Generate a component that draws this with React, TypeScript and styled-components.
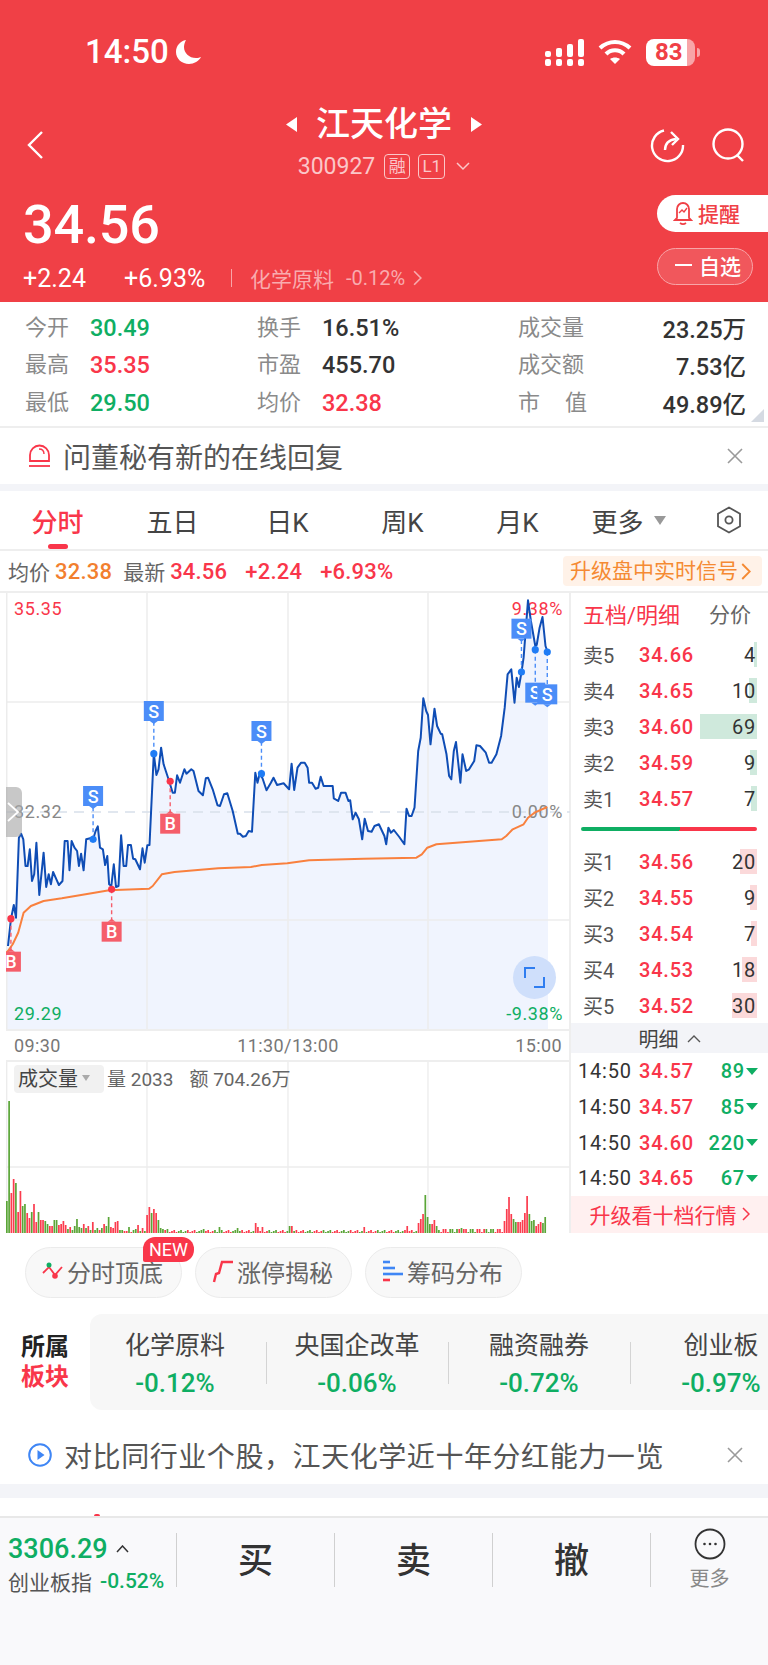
import styled, { createGlobalStyle } from "styled-components";

const RED = "#f9364a";
const GREEN = "#0fae63";
const HEADER_RED = "#f04046";

const GlobalStyle = createGlobalStyle`
  html, body {
    margin: 0;
    padding: 0;
    background: #fff;
  }
  body {
    font-family: Roboto, "Noto Sans CJK SC", sans-serif;
  }
  * {
    box-sizing: border-box;
  }
`;

const Page = styled.div`
  width: 768px;
  height: 1665px;
  overflow: hidden;
  display: flex;
  flex-direction: column;
`;

const Header = styled.header`
  height: 302px;
  flex: none;
  background: ${HEADER_RED};
  color: #fff;
`;

const StatusBar = styled.div`
  height: 104px;
  padding: 37px 73px 0 85px;
  display: flex;
  justify-content: space-between;
  align-items: flex-start;
`;

const StatusLeft = styled.div`
  display: flex;
  align-items: center;
  gap: 6px;
`;

const Clock = styled.span`
  font-size: 33px;
  font-weight: 500;
  line-height: 30px;
`;

const StatusRight = styled.div`
  display: flex;
  align-items: center;
  gap: 14px;
  height: 30px;
`;

const Battery = styled.div`
  position: relative;
  width: 49px;
  height: 27px;
  border-radius: 8px;
  background: linear-gradient(90deg, #fff 0 83%, #f8a5a8 83%);
  color: ${HEADER_RED};
  font-size: 24px;
  font-weight: 700;
  line-height: 27px;
  padding-left: 9px;

  &::after {
    content: "";
    position: absolute;
    right: -5px;
    top: 9px;
    width: 3px;
    height: 9px;
    border-radius: 0 3px 3px 0;
    background: #f8a5a8;
  }
`;

const TitleRow = styled.div`
  height: 82px;
  padding: 0 22px 0 26px;
  display: grid;
  grid-template-columns: 1fr auto 1fr;
  align-items: center;
`;

const NavIcons = styled.div`
  display: flex;
  justify-content: flex-end;
  gap: 26px;
`;

const TitleBlock = styled.div`
  display: flex;
  flex-direction: column;
  align-items: center;
  margin: -3px 0 0 -4px;
`;

const TitleLine = styled.div`
  display: flex;
  align-items: center;
  gap: 19px;
  height: 40px;
  margin-top: -2px;
`;

const Title = styled.h1`
  margin: 0;
  font-size: 34px;
  line-height: 40px;
  font-weight: 500;
`;

const CodeLine = styled.div`
  margin-top: 7px;
  display: flex;
  align-items: center;
  height: 30px;
  color: #fbc7c9;
  font-size: 23px;
`;

const CodeBadge = styled.span<{ $w: number; $l: number }>`
  width: ${(p) => p.$w}px;
  height: 25px;
  margin-left: ${(p) => p.$l}px;
  border: 1px solid #fbc7c9;
  border-radius: 4px;
  font-size: 17px;
  line-height: 23px;
  text-align: center;
`;

const CodeChevron = styled.span`
  margin-left: 11px;
  display: flex;
`;

const QuoteRow = styled.div`
  height: 116px;
  display: flex;
  justify-content: space-between;
`;

const QuoteLeft = styled.div`
  padding: 15px 0 0 23px;
`;

const Price = styled.div`
  font-size: 54px;
  line-height: 48px;
  font-weight: 500;
  letter-spacing: -0.2px;
`;

const ChangeLine = styled.div`
  margin-top: 14px;
  height: 30px;
  display: flex;
  align-items: center;
  font-size: 25px;
  font-weight: 400;
`;

const ChangeValue = styled.span<{ $w: number }>`
  width: ${(p) => p.$w}px;
`;

const ChangeDivider = styled.span`
  width: 1px;
  height: 18px;
  background: #f8a5a8;
  margin-right: 18px;
`;

const SectorName = styled.span`
  color: #f9abae;
  font-size: 21px;
  font-weight: 400;
`;

const SectorValue = styled.span`
  margin: 0 8px 0 12px;
  color: #f9abae;
  font-size: 20px;
  font-weight: 400;
`;

const QuoteButtons = styled.div`
  width: 111px;
  padding-top: 9px;
  display: flex;
  flex-direction: column;
  gap: 16px;
`;

const RemindButton = styled.div`
  height: 37px;
  padding: 0 0 2px 16px;
  border-radius: 19px 0 0 19px;
  background: #fff;
  color: ${HEADER_RED};
  font-size: 21px;
  font-weight: 500;
  display: flex;
  align-items: center;
  gap: 5px;
`;

const WatchButton = styled.div`
  width: 96px;
  height: 37px;
  padding: 0 0 3px 17px;
  border-radius: 19px;
  border: 1px solid #f8a5a8;
  background: rgba(255, 255, 255, 0.12);
  font-size: 21px;
  font-weight: 500;
  display: flex;
  align-items: center;
  gap: 7px;

  &::before {
    content: "";
    width: 17px;
    height: 2px;
    background: #fff;
  }
`;

const Stats = styled.section`
  position: relative;
  height: 126px;
  flex: none;
  padding: 6px 22px 0 25px;
  border-bottom: 2px solid #eee;
  display: grid;
  grid-template-columns: 232px 261px 1fr;
  grid-template-rows: repeat(3, 37.5px);
  font-size: 21px;

  &::after {
    content: "";
    position: absolute;
    right: 4px;
    bottom: 4px;
    border-style: solid;
    border-width: 0 0 13px 13px;
    border-color: transparent transparent #d5dae2 transparent;
  }
`;

const StatCell = styled.div`
  display: flex;
  align-items: center;
`;

const StatLabel = styled.span<{ $w: number }>`
  width: ${(p) => p.$w}px;
  margin-top: -4px;
  color: #8a8a8a;
  font-size: 22px;
`;

const StatValue = styled.span<{ $c?: string; $right?: boolean }>`
  color: ${(p) => p.$c ?? "#333"};
  font-size: 23.5px;
  font-weight: 500;
  margin-top: 2px;
  margin-left: ${(p) => (p.$right ? "auto" : "0")};
`;

const Spread = styled.span`
  display: flex;
  justify-content: space-between;
  width: 69px;
  margin-top: -4px;
  color: #8a8a8a;
  font-size: 22px;
`;

const Notice = styled.div<{ $h: number; $top?: number }>`
  height: ${(p) => p.$h}px;
  flex: none;
  padding: ${(p) => p.$top ?? 0}px 24px 0 28px;
  display: flex;
  align-items: center;
  gap: 12px;
  color: #555;
  font-size: 28px;
`;

const NoticeText = styled.span<{ $sp?: number }>`
  flex: 1;
  letter-spacing: ${(p) => p.$sp ?? 0}px;
  white-space: nowrap;
`;

const GrayBand = styled.div<{ $h: number }>`
  height: ${(p) => p.$h}px;
  flex: none;
  background: #f3f4f8;
`;

const Tabs = styled.nav`
  position: relative;
  height: 60px;
  flex: none;
  display: flex;
  align-items: center;
  border-bottom: 2px solid #eee;
`;

const Tab = styled.div<{ $active?: boolean }>`
  position: relative;
  width: 115px;
  height: 100%;
  display: flex;
  align-items: center;
  justify-content: center;
  gap: 10px;
  color: ${(p) => (p.$active ? RED : "#444")};
  font-size: 26px;
  font-weight: ${(p) => (p.$active ? 500 : 400)};

  ${(p) =>
    p.$active &&
    `&::after {
      content: "";
      position: absolute;
      left: 48px;
      bottom: 0;
      width: 20px;
      height: 5px;
      border-radius: 3px;
      background: ${RED};
    }`}
`;

const MoreTab = styled(Tab)`
  padding-right: 8px;
`;

const DownTriangle = styled.span`
  border-style: solid;
  border-width: 9px 6.5px 0 6.5px;
  border-color: #999 transparent transparent transparent;
`;

const SettingsIcon = styled.div`
  margin-left: 26px;
  display: flex;
`;

const InfoRow = styled.div`
  height: 40px;
  flex: none;
  padding: 0 6px 0 8px;
  display: flex;
  align-items: center;
  font-size: 21px;
`;

const InfoValue = styled.span<{ $c: string; $l: number }>`
  margin-left: ${(p) => p.$l}px;
  color: ${(p) => p.$c};
  font-size: 22px;
  font-weight: 500;
  letter-spacing: 0.2px;
`;

const InfoLabel = styled.span<{ $l?: number }>`
  margin-left: ${(p) => p.$l ?? 0}px;
  color: #666;
`;

const UpgradePill = styled.div`
  margin-left: auto;
  width: 199px;
  height: 30px;
  padding-left: 7px;
  border-radius: 4px;
  background: #fff2e8;
  color: #f58a33;
  font-size: 21px;
  line-height: 30px;
  white-space: nowrap;
  display: flex;
  align-items: center;
  gap: 3px;
`;

const Market = styled.section`
  height: 642px;
  flex: none;
  display: flex;
  border-top: 2px solid #eee;
`;

const ChartColumn = styled.div`
  width: 571px;
  padding-left: 6px;
  border-right: 2px solid #eee;
  display: flex;
  flex-direction: column;
`;

const ChartBox = styled.div`
  position: relative;
  height: 436px;
`;

const ChartSvg = styled.svg`
  display: block;
`;

const Handle = styled.div`
  position: absolute;
  left: 0;
  top: 194px;
  width: 16px;
  height: 50px;
  border-radius: 0 6px 6px 0;
  background: rgba(170, 170, 170, 0.65);
  display: flex;
  align-items: center;
`;

const ExpandButton = styled.div`
  position: absolute;
  left: 507px;
  top: 363px;
  width: 43px;
  height: 43px;
  border-radius: 50%;
  background: #cfdffb;
  display: flex;
  align-items: center;
  justify-content: center;
`;

const TimeAxis = styled.div`
  height: 34px;
  padding: 0 7px 0 8px;
  border-top: 2px solid #eee;
  border-bottom: 2px solid #eee;
  display: flex;
  justify-content: space-between;
  align-items: center;
  color: #777;
  font-size: 18px;
  letter-spacing: 0.4px;
`;

const VolumeBox = styled.div`
  position: relative;
  height: 172px;
`;

const VolumeLegend = styled.div`
  position: absolute;
  left: 8px;
  top: 3px;
  display: flex;
  align-items: center;
  color: #666;
  font-size: 19px;
`;

const VolumeChip = styled.span`
  width: 90px;
  height: 28px;
  padding: 0 0 3px 4px;
  margin-right: 3px;
  border-radius: 4px;
  background: #f1f1f1;
  color: #444;
  font-size: 20px;
  display: flex;
  align-items: center;
  gap: 4px;
`;

const SmallTriangle = styled.span`
  border-style: solid;
  border-width: 6px 4.5px 0 4.5px;
  border-color: #aaa transparent transparent transparent;
`;

const LegendText = styled.span`
  margin-top: -4px;
`;

const LegendGap = styled.span`
  margin-left: 16px;
`;

const SidePanel = styled.aside`
  flex: 1;
  display: flex;
  flex-direction: column;
`;

const SideHead = styled.div`
  height: 44px;
  padding: 0 17px 4px 12px;
  display: flex;
  justify-content: space-between;
  align-items: center;
`;

const SideTitle = styled.span`
  color: ${RED};
  font-size: 22px;
`;

const SideLink = styled.span`
  color: #666;
  font-size: 21px;
`;

const Book = styled.div`
  display: flex;
  flex-direction: column;
`;

const BookRow = styled.div`
  position: relative;
  height: 36px;
  padding: 0 12px 0 12px;
  display: flex;
  align-items: center;
  font-size: 20px;
`;

const DepthBar = styled.span<{ $c: string }>`
  position: absolute;
  right: 11px;
  top: 5px;
  height: 25px;
  background: ${(p) => p.$c};
`;

const RowLabel = styled.span`
  width: 56px;
  color: #555;
`;

const RowPrice = styled.span`
  color: ${RED};
  font-weight: 500;
  letter-spacing: 0.8px;
`;

const RowValue = styled.span`
  position: relative;
  margin-left: auto;
  color: #333;
  letter-spacing: 0.8px;
`;

const SplitBar = styled.div`
  height: 4px;
  margin: 10px 11px 13px 10px;
  border-radius: 2px;
  background: linear-gradient(100deg, ${GREEN} 0 56%, ${RED} 56%);
`;

const DetailHead = styled.div`
  height: 31px;
  margin-top: -1px;
  background: #f3f4f8;
  display: flex;
  align-items: center;
  justify-content: center;
  gap: 8px;
  color: #444;
  font-size: 20px;
`;

const TradeRow = styled.div`
  height: 36px;
  padding: 0 10px 0 7px;
  display: flex;
  align-items: center;
  font-size: 20px;
  letter-spacing: 0.8px;
`;

const TradeTime = styled.span`
  width: 61px;
  color: #333;
`;

const TradeVolume = styled.span`
  margin-left: auto;
  margin-right: 1px;
  color: ${GREEN};
  font-weight: 500;
`;

const GreenTriangle = styled.span`
  border-style: solid;
  border-width: 7px 6.5px 0 6.5px;
  border-color: ${GREEN} transparent transparent transparent;
`;

const UpgradeBar = styled.div`
  height: 37px;
  padding-bottom: 2px;
  background: #fff0f0;
  color: ${RED};
  font-size: 21px;
  display: flex;
  align-items: center;
  justify-content: center;
  gap: 5px;
`;

const PillRow = styled.div`
  height: 81px;
  flex: none;
  padding: 14px 0 0 25px;
  display: flex;
  gap: 13px;
`;

const Pill = styled.div`
  position: relative;
  width: 157px;
  height: 51px;
  padding: 0 0 3px 16px;
  border-radius: 26px;
  border: 1px solid #ebebeb;
  background: #f8f8f8;
  color: #666;
  font-size: 24px;
  display: flex;
  align-items: center;
  gap: 3px;
`;

const NewBadge = styled.span`
  position: absolute;
  left: 117px;
  top: -11px;
  width: 51px;
  height: 25px;
  border-radius: 12px 12px 12px 2px;
  background: ${RED};
  color: #fff;
  font-size: 18px;
  line-height: 25px;
  text-align: center;
`;

const SectorRow = styled.section`
  height: 96px;
  flex: none;
  display: flex;
`;

const SectorHead = styled.div`
  width: 90px;
  flex: none;
  padding: 18px 0 0 21px;
  font-size: 24px;
  line-height: 30px;
  font-weight: 700;
  color: #222;
`;

const SectorHeadRed = styled.div`
  color: ${RED};
`;

const SectorBox = styled.div`
  flex: 1;
  padding-top: 4px;
  border-radius: 12px 0 0 12px;
  background: #f7f7f7;
  display: flex;
  align-items: center;
  overflow: hidden;
`;

const SectorItem = styled.div`
  position: relative;
  width: 182px;
  flex: none;
  display: flex;
  flex-direction: column;
  align-items: center;
  gap: 7px;

  &:first-child {
    margin-left: -6px;
  }

  &:not(:first-child)::before {
    content: "";
    position: absolute;
    left: 0;
    top: 12px;
    width: 1px;
    height: 42px;
    background: #d4d4d4;
  }
`;

const SectorItemName = styled.span`
  color: #444;
  font-size: 25px;
  line-height: 31px;
  white-space: nowrap;
`;

const SectorItemValue = styled.span`
  color: ${GREEN};
  font-size: 26px;
  line-height: 31px;
  font-weight: 500;
  white-space: nowrap;
`;

const BlankStrip = styled.div`
  position: relative;
  height: 20px;
  flex: none;
  border-bottom: 2px solid #e8e8e8;

  &::after {
    content: "";
    position: absolute;
    left: 94px;
    bottom: 0;
    width: 6px;
    height: 2px;
    border-radius: 3px 3px 0 0;
    background: ${RED};
  }
`;

const BottomBar = styled.footer`
  flex: 1;
  padding-top: 15px;
  background: #f9f9fb;
  display: flex;
  align-items: flex-start;
`;

const IndexCell = styled.div`
  width: 176px;
  height: 54px;
  flex: none;
  padding-left: 8px;
`;

const IndexLine = styled.div`
  display: flex;
  align-items: center;
  gap: 8px;
  height: 32px;
  color: ${GREEN};
  font-size: 27px;
  font-weight: 500;
`;

const IndexSub = styled.div`
  display: flex;
  align-items: center;
  gap: 8px;
  height: 32px;
  color: #555;
  font-size: 21px;
  white-space: nowrap;
`;

const IndexSubValue = styled.span`
  color: ${GREEN};
  font-size: 21px;
  font-weight: 500;
`;

const TradeButton = styled.div`
  width: 158px;
  height: 54px;
  padding-bottom: 6px;
  flex: none;
  border-left: 1px solid #d0d0d0;
  color: #333;
  font-size: 35px;
  font-weight: 500;
  display: flex;
  align-items: center;
  justify-content: center;
`;

const MoreCell = styled.div`
  flex: 1;
  height: 54px;
  border-left: 1px solid #d0d0d0;
  display: flex;
  flex-direction: column;
  align-items: center;
  color: #888;
  font-size: 20px;
  line-height: 26px;
`;

const MoreCircleWrap = styled.div`
  margin: -5px 0 6px;
  height: 32px;
  display: flex;
`;

const z = (x: number, y: number): [number, number] => [x / 2.75 - 6, y / 3 - 2];

const PRICE: [number, number][] = [
  [22, 1065], [30, 985], [38, 942], [44, 980], [52, 740], [58, 728], [64, 745], [70, 825], [76, 825], [82, 775], [88, 870], [94, 850], [100, 755], [108, 912], [120, 785], [127, 888], [134, 850], [140, 880], [146, 843], [155, 865], [162, 882], [172, 870], [178, 750], [186, 750], [191, 838], [197, 750], [205, 770], [212, 780], [217, 825], [223, 788], [230, 838], [237, 745], [248, 742], [256, 745], [263, 720], [269, 706], [275, 770], [283, 775], [289, 822], [295, 795], [300, 880], [306, 885], [313, 820], [319, 888], [326, 885], [333, 733], [340, 825], [347, 825], [352, 762], [360, 762], [366, 803], [372, 805], [385, 835], [392, 772], [398, 815], [405, 763], [411, 762], [423, 488], [430, 552], [436, 535], [443, 470], [450, 520], [465, 570], [475, 605], [481, 605], [487, 553], [495, 575], [507, 535], [513, 548], [526, 535], [532, 540], [546, 600], [558, 613], [566, 562], [572, 560], [585, 595], [598, 643], [605, 645], [616, 610], [625, 607], [640, 660], [654, 728], [660, 728], [668, 737], [676, 735], [684, 720], [693, 722], [702, 545], [708, 575], [714, 548], [722, 562], [733, 598], [745, 575], [752, 560], [762, 582], [780, 577], [795, 595], [802, 518], [809, 597], [818, 530], [828, 515], [838, 515], [846, 530], [850, 575], [858, 575], [868, 593], [875, 590], [882, 557], [890, 585], [915, 585], [918, 622], [930, 630], [938, 605], [950, 605], [958, 630], [963, 628], [970, 685], [978, 665], [987, 685], [996, 745], [1003, 683], [1012, 720], [1022, 722], [1030, 705], [1042, 700], [1057, 735], [1062, 760], [1068, 710], [1075, 725], [1083, 717], [1098, 738], [1112, 760], [1118, 653], [1125, 675], [1132, 675], [1140, 650], [1150, 480], [1157, 440], [1164, 322], [1172, 360], [1177, 372], [1184, 460], [1195, 353], [1202, 405], [1212, 428], [1216, 430], [1228, 490], [1235, 555], [1241, 565], [1248, 480], [1254, 453], [1266, 575], [1272, 490], [1282, 540], [1290, 535], [1304, 510], [1310, 463], [1320, 465], [1336, 485], [1345, 515], [1352, 515], [1365, 490], [1378, 435], [1388, 350], [1396, 250], [1406, 235], [1415, 335], [1421, 260], [1427, 288], [1434, 243], [1440, 200], [1452, 28], [1460, 90], [1472, 165], [1476, 162], [1484, 110], [1492, 78], [1500, 165], [1505, 180],
];

const AVERAGE: [number, number][] = [
  [17, 1085], [22, 1080], [35, 1060], [50, 1025], [65, 965], [85, 945], [120, 930], [170, 922], [260, 905], [300, 898], [410, 893], [420, 885], [445, 850], [480, 843], [600, 832], [690, 828], [720, 822], [790, 817], [850, 808], [1000, 803], [1145, 800], [1160, 790], [1175, 770], [1200, 760], [1380, 745], [1392, 735], [1410, 715], [1440, 700], [1452, 680], [1470, 665], [1505, 648],
];

const pts = (list: [number, number][]) =>
  list.map(([x, y]) => z(x, y).map((n) => n.toFixed(1)).join(",")).join(" ");

const AREA = `${z(17, 1315).join(",")} ${z(17, 1085).join(",")} ${pts(PRICE)} ${z(1507, 180).join(",")} ${z(1507, 1315).join(",")}`;

const SIGNALS: { kind: "S" | "B"; x: number; y: number; ly: number }[] = [
  { kind: "S", x: 256, y: 745, ly: 615 },
  { kind: "S", x: 423, y: 488, ly: 360 },
  { kind: "S", x: 719, y: 548, ly: 420 },
  { kind: "S", x: 1434, y: 243, ly: 113 },
  { kind: "S", x: 1472, y: 176, ly: 305 },
  { kind: "S", x: 1505, y: 183, ly: 310 },
  { kind: "B", x: 30, y: 983, ly: 1112 },
  { kind: "B", x: 307, y: 895, ly: 1022 },
  { kind: "B", x: 468, y: 571, ly: 698 },
];

const Signal = ({ kind, x, y, ly }: { kind: "S" | "B"; x: number; y: number; ly: number }) => {
  const [px, py] = z(x, y);
  const [, lab] = z(x, ly);
  const sell = kind === "S";
  const fill = sell ? "#4b8df8" : "#f55d6a";
  const dot = sell ? "#1f7cf5" : RED;
  const tip = sell ? lab + 13 : lab - 13;
  const edge = sell ? lab + 10 : lab - 10;
  return (
    <g>
      <line x1={px} y1={py} x2={px} y2={lab} stroke={fill} strokeWidth="1.4" strokeDasharray="4 3" />
      <rect x={px - 10} y={lab - 10} width="20" height="20" fill={fill} />
      <polygon points={`${px - 4},${edge} ${px + 4},${edge} ${px},${tip}`} fill={fill} />
      <text x={px} y={lab + 6.5} textAnchor="middle" fill="#fff" fontSize="18" fontWeight="500" fontFamily="Roboto, sans-serif">
        {kind}
      </text>
      <circle cx={px} cy={py} r="3.6" fill={dot} />
    </g>
  );
};

const HEAD_BARS: [number, string][] = [
  [32, "g"], [132, "g"], [40, "r"], [54, "r"], [50, "g"], [21, "r"], [42, "r"], [27, "g"], [29, "g"], [20, "r"], [15, "r"], [21, "g"], [29, "r"], [11, "r"], [21, "g"], [13, "r"], [13, "r"], [12, "g"], [9, "g"], [7, "r"], [7, "r"], [13, "g"], [13, "g"], [8, "r"], [9, "r"], [12, "r"], [8, "r"], [4, "g"], [6, "r"], [3, "g"], [7, "g"], [14, "g"], [6, "g"], [5, "g"], [9, "r"], [5, "g"], [7, "r"], [3, "g"], [11, "r"], [3, "g"], [5, "g"], [3, "r"], [5, "g"], [9, "r"], [7, "g"], [16, "g"], [6, "r"], [5, "r"], [11, "r"], [12, "r"], [3, "g"], [3, "g"], [2, "r"], [2, "r"], [6, "g"], [1, "r"], [3, "g"], [4, "g"], [8, "r"], [2, "g"], [5, "r"], [2, "g"], [18, "r"], [26, "r"], [20, "g"], [24, "r"], [20, "r"], [13, "g"], [5, "g"], [4, "g"], [3, "r"], [4, "g"],
];

const SPIKES: Record<number, [number, string]> = {
  87: [4, "g"], 94: [6, "g"], 102: [5, "g"], 110: [10, "r"], 111: [6, "r"], 113: [6, "r"], 125: [7, "g"], 126: [7, "r"], 158: [6, "r"], 177: [7, "r"], 182: [10, "r"], 183: [14, "r"], 184: [19, "r"], 185: [38, "g"], 186: [16, "g"], 187: [9, "g"], 188: [9, "r"], 189: [13, "r"], 190: [7, "g"], 191: [3, "g"], 201: [5, "g"], 220: [12, "r"], 221: [24, "r"], 222: [36, "r"], 223: [19, "r"], 224: [14, "g"], 225: [11, "g"], 226: [11, "r"], 227: [11, "r"], 228: [13, "r"], 229: [20, "r"], 230: [37, "r"], 231: [19, "g"], 232: [12, "g"], 233: [13, "g"], 234: [7, "r"], 235: [9, "r"], 236: [11, "r"], 237: [10, "g"], 238: [16, "g"],
};

const VOLUME_BARS = Array.from({ length: 239 }, (_, i): [number, string] => {
  if (i < HEAD_BARS.length) return HEAD_BARS[i];
  if (SPIKES[i]) return SPIKES[i];
  const low = 1 + ((i * 7) % 3) + (i > 192 && i < 220 ? (i * 5) % 3 : 0);
  return [low, (i >> 2) % 2 === 0 ? "r" : "g"];
});

const ASKS = [
  { label: "卖5", price: "34.66", size: "4", bar: 3 },
  { label: "卖4", price: "34.65", size: "10", bar: 8 },
  { label: "卖3", price: "34.60", size: "69", bar: 57 },
  { label: "卖2", price: "34.59", size: "9", bar: 7 },
  { label: "卖1", price: "34.57", size: "7", bar: 6 },
];

const BIDS = [
  { label: "买1", price: "34.56", size: "20", bar: 17 },
  { label: "买2", price: "34.55", size: "9", bar: 7 },
  { label: "买3", price: "34.54", size: "7", bar: 6 },
  { label: "买4", price: "34.53", size: "18", bar: 15 },
  { label: "买5", price: "34.52", size: "30", bar: 25 },
];

const TRADES = [
  { price: "34.57", size: "89" },
  { price: "34.57", size: "85" },
  { price: "34.60", size: "220" },
  { price: "34.65", size: "67" },
];

const SECTORS = [
  { name: "化学原料", value: "-0.12%" },
  { name: "央国企改革", value: "-0.06%" },
  { name: "融资融券", value: "-0.72%" },
  { name: "创业板", value: "-0.97%" },
];

const CloseIcon = () => (
  <svg width="18" height="18" viewBox="0 0 18 18" fill="none" stroke="#9a9a9a" strokeWidth="1.6">
    <path d="M2 2l14 14M16 2L2 16" />
  </svg>
);

const Chevron = ({ c, w = 8, h = 14 }: { c: string; w?: number; h?: number }) => (
  <svg width={w} height={h} viewBox="0 0 8 14" fill="none" stroke={c} strokeWidth="1.5">
    <path d="M1 1l6 6-6 6" />
  </svg>
);

const App = () => {
  return (
    <Page>
      <GlobalStyle />
      <Header>
        <StatusBar>
          <StatusLeft>
            <Clock>14:50</Clock>
            <svg width="27" height="26" viewBox="0 0 27 26">
              <path d="M11 1C5 2 1 7 1 13c0 7 6 12 13 12 5 0 10-3 12-7-1 .5-3 1-5 1-7 0-12-5-12-11 0-3 1-5 2-7z" fill="#fff" />
            </svg>
          </StatusLeft>
          <StatusRight>
            <svg width="39" height="27" viewBox="0 0 39 27" fill="#fff">
              <rect x="0" y="12" width="6" height="6" rx="2" />
              <rect x="0" y="20" width="6" height="7" rx="2" />
              <rect x="11" y="9" width="6" height="9" rx="2" />
              <rect x="11" y="20" width="6" height="7" rx="2" />
              <rect x="22" y="5" width="6" height="13" rx="2" />
              <rect x="22" y="20" width="6" height="7" rx="2" />
              <rect x="33" y="0" width="6" height="18" rx="2" />
              <rect x="33" y="20" width="6" height="7" rx="2" />
            </svg>
            <svg width="34" height="26" viewBox="0 0 34 26" fill="none" stroke="#fff" strokeWidth="4.2">
              <path d="M2 9c9-8 21-8 30 0" />
              <path d="M8 15c5-5 13-5 18 0" />
              <path d="M17 25l-5-5c3-2 7-2 10 0z" fill="#fff" stroke="none" />
            </svg>
            <Battery>83</Battery>
          </StatusRight>
        </StatusBar>
        <TitleRow>
          <svg width="18" height="30" viewBox="0 0 18 30" fill="none" stroke="#fff" strokeWidth="2.4">
            <path d="M16 2L3 15l13 13" />
          </svg>
          <TitleBlock>
            <TitleLine>
              <svg width="11" height="15" viewBox="0 0 11 15" fill="#fff">
                <path d="M11 0v15L0 7.5z" />
              </svg>
              <Title>江天化学</Title>
              <svg width="11" height="15" viewBox="0 0 11 15" fill="#fff">
                <path d="M0 0v15l11-7.500z" />
              </svg>
            </TitleLine>
            <CodeLine>
              300927
              <CodeBadge $w={26} $l={9}>融</CodeBadge>
              <CodeBadge $w={27} $l={8}>L1</CodeBadge>
              <CodeChevron>
                <svg width="14" height="9" viewBox="0 0 14 9" fill="none" stroke="#fbc7c9" strokeWidth="1.5">
                  <path d="M1 1l6 6 6-6" />
                </svg>
              </CodeChevron>
            </CodeLine>
          </TitleBlock>
          <NavIcons>
            <svg width="35" height="35" viewBox="0 0 35 35" fill="none" stroke="#fff" strokeWidth="2.4">
              <path d="M14 2.500A15.500 15.500 0 1 0 33 17" />
              <path d="M15 22c0-6 3-10 11-11" />
              <path d="M21 4l7 7-6 6" />
            </svg>
            <svg width="35" height="35" viewBox="0 0 35 35" fill="none" stroke="#fff" strokeWidth="2.4">
              <circle cx="17" cy="16" r="14.500" />
              <path d="M26 27l6 6" />
            </svg>
          </NavIcons>
        </TitleRow>
        <QuoteRow>
          <QuoteLeft>
            <Price>34.56</Price>
            <ChangeLine>
              <ChangeValue $w={101}>+2.24</ChangeValue>
              <ChangeValue $w={107}>+6.93%</ChangeValue>
              <ChangeDivider />
              <SectorName>化学原料</SectorName>
              <SectorValue>-0.12%</SectorValue>
              <Chevron c="#f9abae" w={9} h={16} />
            </ChangeLine>
          </QuoteLeft>
          <QuoteButtons>
            <RemindButton>
              <svg width="20" height="26" viewBox="0 0 20 26" fill="none" stroke={HEADER_RED} strokeWidth="1.8">
                <path d="M4 18V9a6 6 0 0 1 12 0v9l2 2H2z" />
                <path d="M7 23c2 1.500 4 1.500 6 0" />
                <path d="M6 13l3-3 2 2 3-4" strokeWidth="1.400" />
              </svg>
              提醒
            </RemindButton>
            <WatchButton>自选</WatchButton>
          </QuoteButtons>
        </QuoteRow>
      </Header>

      <Stats>
        <StatCell>
          <StatLabel $w={65}>今开</StatLabel>
          <StatValue $c={GREEN}>30.49</StatValue>
        </StatCell>
        <StatCell>
          <StatLabel $w={65}>换手</StatLabel>
          <StatValue>16.51%</StatValue>
        </StatCell>
        <StatCell>
          <StatLabel $w={69}>成交量</StatLabel>
          <StatValue $right>23.25万</StatValue>
        </StatCell>
        <StatCell>
          <StatLabel $w={65}>最高</StatLabel>
          <StatValue $c={RED}>35.35</StatValue>
        </StatCell>
        <StatCell>
          <StatLabel $w={65}>市盈</StatLabel>
          <StatValue>455.70</StatValue>
        </StatCell>
        <StatCell>
          <StatLabel $w={69}>成交额</StatLabel>
          <StatValue $right>7.53亿</StatValue>
        </StatCell>
        <StatCell>
          <StatLabel $w={65}>最低</StatLabel>
          <StatValue $c={GREEN}>29.50</StatValue>
        </StatCell>
        <StatCell>
          <StatLabel $w={65}>均价</StatLabel>
          <StatValue $c={RED}>32.38</StatValue>
        </StatCell>
        <StatCell>
          <Spread>
            <span>市</span>
            <span>值</span>
          </Spread>
          <StatValue $right>49.89亿</StatValue>
        </StatCell>
      </Stats>

      <Notice $h={56}>
        <svg width="23" height="24" viewBox="0 0 23 24" fill="none" stroke={RED} strokeWidth="1.8">
          <path d="M2 17V11a9.500 9.500 0 0 1 19 0v6z" />
          <path d="M1 22h21" />
          <path d="M11 5c3 0 5 2 5 5" strokeWidth="1.400" />
        </svg>
        <NoticeText>问董秘有新的在线回复</NoticeText>
        <CloseIcon />
      </Notice>
      <GrayBand $h={7} />

      <Tabs>
        <Tab $active>分时</Tab>
        <Tab>五日</Tab>
        <Tab>日K</Tab>
        <Tab>周K</Tab>
        <Tab>月K</Tab>
        <MoreTab>
          更多
          <DownTriangle />
        </MoreTab>
        <SettingsIcon>
          <svg width="26" height="28" viewBox="0 0 26 28" fill="none" stroke="#555" strokeWidth="1.8">
            <path d="M13 1.500l11 6.250v12.500L13 26.500 2 20.250V7.750z" />
            <circle cx="13" cy="14" r="3.600" />
          </svg>
        </SettingsIcon>
      </Tabs>

      <InfoRow>
        <InfoLabel>均价</InfoLabel>
        <InfoValue $c="#f27f2f" $l={5}>32.38</InfoValue>
        <InfoLabel $l={11}>最新</InfoLabel>
        <InfoValue $c={RED} $l={5}>34.56</InfoValue>
        <InfoValue $c={RED} $l={18}>+2.24</InfoValue>
        <InfoValue $c={RED} $l={18}>+6.93%</InfoValue>
        <UpgradePill>
          升级盘中实时信号
          <Chevron c="#f58a33" w={10} h={19} />
        </UpgradePill>
      </InfoRow>

      <Market>
        <ChartColumn>
          <ChartBox>
            <ChartSvg width="564" height="436" viewBox="0 0 564 436">
              <polygon points={AREA} fill="#f0f4fe" />
              <g stroke="#ececec" strokeWidth="1.500">
                <line x1="141" y1="0" x2="141" y2="436" />
                <line x1="282" y1="0" x2="282" y2="436" />
                <line x1="422" y1="0" x2="422" y2="436" />
                <line x1="0" y1="109" x2="564" y2="109" />
                <line x1="0" y1="327" x2="564" y2="327" />
                <line x1="0.700" y1="0" x2="0.700" y2="436" />
              </g>
              <line x1="0" y1="219" x2="564" y2="219" stroke="#d8e0ea" strokeWidth="1.500" strokeDasharray="10 7" />
              <g fontFamily="Roboto, sans-serif" fontSize="18" letterSpacing="0.6">
                <text x="8" y="22" fill={RED}>35.35</text>
                <text x="8" y="225" fill="#888">32.32</text>
                <text x="8" y="427" fill={GREEN}>29.29</text>
                <text x="557" y="22" fill={RED} textAnchor="end">9.38%</text>
                <text x="557" y="225" fill="#888" textAnchor="end">0.00%</text>
                <text x="557" y="427" fill={GREEN} textAnchor="end">-9.38%</text>
              </g>
              <polyline points={pts(PRICE)} fill="none" stroke="#0f4db5" strokeWidth="2" strokeLinejoin="round" />
              <polyline points={pts(AVERAGE)} fill="none" stroke="#f9803e" strokeWidth="2" strokeLinejoin="round" />
              {SIGNALS.map((s) => (
                <Signal key={`${s.kind}${s.x}`} {...s} />
              ))}
            </ChartSvg>
            <Handle>
              <svg width="14" height="22" viewBox="0 0 14 22" fill="none" stroke="#fff" strokeWidth="1.800">
                <path d="M2 2l10 9-10 9" />
              </svg>
            </Handle>
            <ExpandButton>
              <svg width="21" height="21" viewBox="0 0 21 21" fill="none" stroke="#2f7df0" strokeWidth="2">
                <path d="M1 11V1h10" />
                <path d="M20 10v10H10" />
              </svg>
            </ExpandButton>
          </ChartBox>
          <TimeAxis>
            <span>09:30</span>
            <span>11:30/13:00</span>
            <span>15:00</span>
          </TimeAxis>
          <VolumeBox>
            <ChartSvg width="564" height="171" viewBox="0 0 564 171">
              <g stroke="#ececec" strokeWidth="1.300">
                <line x1="141" y1="0" x2="141" y2="171" />
                <line x1="282" y1="0" x2="282" y2="171" />
                <line x1="422" y1="0" x2="422" y2="171" />
                <line x1="0" y1="105" x2="564" y2="105" />
                <line x1="0.700" y1="0" x2="0.700" y2="171" />
              </g>
              {VOLUME_BARS.map(([h, c], i) => (
                <rect
                  key={i}
                  x={i * 2.262}
                  y={171 - h}
                  width="1.700"
                  height={h}
                  fill={c === "r" ? "#fb3c4e" : "#5aa537"}
                />
              ))}
            </ChartSvg>
            <VolumeLegend>
              <VolumeChip>
                成交量
                <SmallTriangle />
              </VolumeChip>
              <LegendText>
                量 2033
                <LegendGap>额 704.26万</LegendGap>
              </LegendText>
            </VolumeLegend>
          </VolumeBox>
        </ChartColumn>

        <SidePanel>
          <SideHead>
            <SideTitle>五档/明细</SideTitle>
            <SideLink>分价</SideLink>
          </SideHead>
          <Book>
            {ASKS.map((r) => (
              <BookRow key={r.label}>
                <DepthBar $c="#cfe9dc" style={{ width: r.bar }} />
                <RowLabel>{r.label}</RowLabel>
                <RowPrice>{r.price}</RowPrice>
                <RowValue>{r.size}</RowValue>
              </BookRow>
            ))}
          </Book>
          <SplitBar />
          <Book>
            {BIDS.map((r) => (
              <BookRow key={r.label}>
                <DepthBar $c="#fbd9da" style={{ width: r.bar }} />
                <RowLabel>{r.label}</RowLabel>
                <RowPrice>{r.price}</RowPrice>
                <RowValue>{r.size}</RowValue>
              </BookRow>
            ))}
          </Book>
          <DetailHead>
            明细
            <svg width="14" height="9" viewBox="0 0 14 9" fill="none" stroke="#555" strokeWidth="1.400">
              <path d="M1 8l6-6 6 6" />
            </svg>
          </DetailHead>
          {TRADES.map((t, i) => (
            <TradeRow key={i}>
              <TradeTime>14:50</TradeTime>
              <RowPrice>{t.price}</RowPrice>
              <TradeVolume>{t.size}</TradeVolume>
              <GreenTriangle />
            </TradeRow>
          ))}
          <UpgradeBar>
            升级看十档行情
            <Chevron c={RED} w={8} h={14} />
          </UpgradeBar>
        </SidePanel>
      </Market>

      <PillRow>
        <Pill>
          <svg width="22" height="22" viewBox="0 0 22 22" fill="none" stroke={RED} strokeWidth="1.800">
            <path d="M1 13l6-6 6 8 7-8" />
            <circle cx="7" cy="5" r="2.500" fill={GREEN} stroke="none" />
            <circle cx="13" cy="16" r="2.800" fill={RED} stroke="none" />
          </svg>
          分时顶底
          <NewBadge>NEW</NewBadge>
        </Pill>
        <Pill>
          <svg width="22" height="26" viewBox="0 0 22 26" fill="none" stroke={RED} strokeWidth="2.400">
            <path d="M2 24l2-8 3-1 3-11h11" />
          </svg>
          涨停揭秘
        </Pill>
        <Pill>
          <svg width="22" height="24" viewBox="0 0 22 24" fill="none" strokeWidth="2.600">
            <path d="M1 3h7" stroke="#3f86f5" />
            <path d="M1 9h12" stroke="#3f86f5" />
            <path d="M1 15h20" stroke="#3f86f5" />
            <path d="M1 21h7" stroke={RED} />
          </svg>
          筹码分布
        </Pill>
      </PillRow>

      <SectorRow>
        <SectorHead>
          所属
          <SectorHeadRed>板块</SectorHeadRed>
        </SectorHead>
        <SectorBox>
          {SECTORS.map((s) => (
            <SectorItem key={s.name}>
              <SectorItemName>{s.name}</SectorItemName>
              <SectorItemValue>{s.value}</SectorItemValue>
            </SectorItem>
          ))}
        </SectorBox>
      </SectorRow>

      <Notice $h={74} $top={16}>
        <svg width="24" height="24" viewBox="0 0 24 24" fill="none" stroke="#3f86f5" strokeWidth="2">
          <circle cx="12" cy="12" r="10.800" />
          <path d="M9.500 7l7 5-7 5z" fill="#3f86f5" stroke="none" />
        </svg>
        <NoticeText $sp={0.57}>对比同行业个股，江天化学近十年分红能力一览</NoticeText>
        <CloseIcon />
      </Notice>
      <GrayBand $h={14} />
      <BlankStrip />

      <BottomBar>
        <IndexCell>
          <IndexLine>
            3306.29
            <svg width="13" height="8" viewBox="0 0 13 8" fill="none" stroke="#333" strokeWidth="1.500">
              <path d="M1 7l5.500-6L12 7" />
            </svg>
          </IndexLine>
          <IndexSub>
            创业板指
            <IndexSubValue>-0.52%</IndexSubValue>
          </IndexSub>
        </IndexCell>
        <TradeButton>买</TradeButton>
        <TradeButton>卖</TradeButton>
        <TradeButton>撤</TradeButton>
        <MoreCell>
          <MoreCircleWrap>
            <svg width="32" height="32" viewBox="0 0 32 32" fill="none" stroke="#333" strokeWidth="1.800">
              <circle cx="16" cy="16" r="14.500" />
              <g fill="#333" stroke="none">
                <circle cx="10.500" cy="16" r="1.300" />
                <circle cx="16" cy="16" r="1.300" />
                <circle cx="21.500" cy="16" r="1.300" />
              </g>
            </svg>
          </MoreCircleWrap>
          更多
        </MoreCell>
      </BottomBar>
    </Page>
  );
};

export default App;
